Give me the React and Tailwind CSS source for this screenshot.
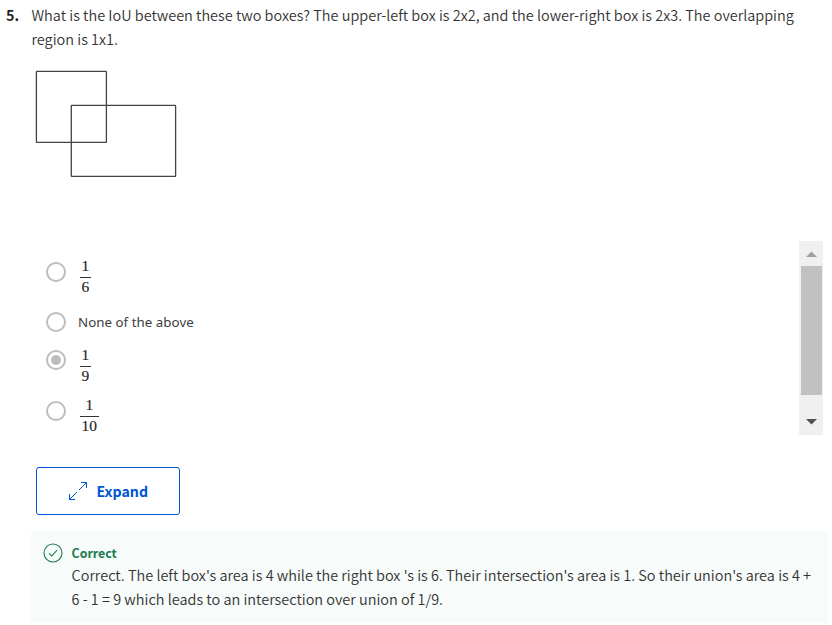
function Radio({ checked }) {
  return (
    <span className="flex size-5 shrink-0 items-center justify-center rounded-full border-2 border-[#bdbdbd] bg-white">
      {checked && <span className="size-2.5 rounded-full bg-[#bdbdbd]" />}
    </span>
  );
}

function Fraction({ top, bottom }) {
  return (
    <span className="flex flex-col items-center font-['Liberation_Serif',serif] text-[15.5px] leading-[18px] text-[#1f1f1f] [-webkit-text-stroke:0.15px_#1f1f1f]">
      <span className="h-5">{top}</span>
      <span className="h-px w-full bg-[#333]" />
      <span className="px-[1.5px]">{bottom}</span>
    </span>
  );
}

function Option({ checked, className, children }) {
  return (
    <label className={`flex ${className}`}>
      <Radio checked={checked} />
      {children}
    </label>
  );
}

export default function App() {
  return (
    <main className="h-[625px] w-[832px] overflow-hidden bg-white font-['Noto_Sans_CJK_SC',sans-serif] text-[14.48px] leading-6 font-[350] text-[#333]">
      <div className="flex h-[70px] pt-[3px]">
        <b className="w-[31.5px] shrink-0 pl-1.5 text-[14.3px] font-bold text-[#1f1f1f]">5.</b>
        <p className="whitespace-nowrap">
          What is the IoU between these two boxes? The upper-left box is 2x2, and the lower-right box is 2x3. The overlapping
          <br />
          region is 1x1.
        </p>
      </div>
      <svg className="ml-[35px] block" width="142" height="108" fill="none" stroke="#444" strokeWidth="1.3">
        <rect x="1.4" y="1.4" width="70" height="71" rx="0.5" />
        <rect x="36.3" y="35.4" width="104.3" height="71" rx="0.5" />
      </svg>
      <div className="mt-[63px] flex h-[194px] justify-between pr-[9px] pl-[46px]">
        <div className="flex flex-col">
          <Option className="mt-4 h-[55px] items-start gap-[14px] pt-[5px]">
            <span className="-mt-[5px]"><Fraction top="1" bottom="6" /></span>
          </Option>
          <Option className="h-5 items-center gap-3">
            <span className="font-['Noto_Sans',sans-serif] text-[13.3px] font-normal tracking-[0.04px] text-[#3c3c3c]">None of the above</span>
          </Option>
          <Option checked className="mt-[13px] h-[50px] items-start gap-[14px] pt-[5px]">
            <span className="-mt-1"><Fraction top="1" bottom="9" /></span>
          </Option>
          <Option className="h-10 items-start gap-[14px] pt-[6px]">
            <span className="-mt-[5px]"><Fraction top="1" bottom="10" /></span>
          </Option>
        </div>
        <div className="flex w-6 flex-col items-center bg-[#f0f0f0]">
          <svg className="block h-[25px] w-6 shrink-0" fill="#a0a0a0">
            <path d="M7 16L12.5 10.5L18 16Z" />
          </svg>
          <div className="h-[129px] w-[21px] bg-[#c1c1c1]" />
          <svg className="block h-10 w-6 shrink-0" fill="#505050">
            <path d="M7 24L12.5 29.5L18 24Z" />
          </svg>
        </div>
      </div>
      <button className="mt-8 ml-9 flex h-12 w-36 items-center gap-[9.5px] rounded-[3px] border border-[#0056d2] pl-8 text-[14.2px] font-bold text-[#0056d2]">
        <svg width="18" height="18" fill="none" stroke="currentColor" strokeWidth="1">
          <path d="M.5 17.5L8 10M10 8L17.5.5M12 .5H17.5V6M.5 12V17.5H6" />
        </svg>
        Expand
      </button>
      <section className="mt-4 ml-[31px] flex h-[92px] w-[797px] gap-[8.5px] bg-[#f7fbf9] pt-[11px] pl-3">
        <svg className="mt-px shrink-0" width="20" height="20" fill="none" stroke="#1d7c50" strokeWidth="1.1">
          <circle cx="10" cy="10" r="9" />
          <path d="M6 10.3L8.8 13L14 7.2" />
        </svg>
        <div className="whitespace-nowrap">
          <h2 className="h-[21px] text-[12.4px] leading-[22px] font-bold text-[#1d7c50]">Correct</h2>
          <p>
            Correct. The left box's area is 4 while the right box 's is 6. Their intersection's area is 1. So their union's area is 4 +
            <br />
            6 - 1 = 9 which leads to an intersection over union of 1/9.
          </p>
        </div>
      </section>
    </main>
  );
}
